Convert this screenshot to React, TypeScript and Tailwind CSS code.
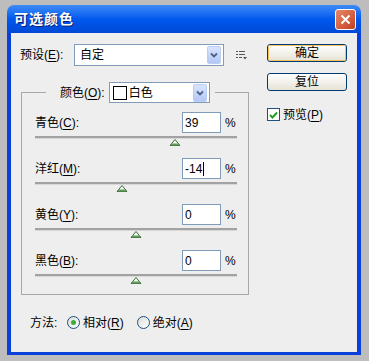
import React from "react"

const font = "font-['Liberation_Sans','Noto_Sans_CJK_SC',sans-serif]"

interface SliderRowProps {
  name: string
  hotkey: string
  value: number
  caret?: boolean
}

const Mn = ({ k }: { k: string }) => <span className="underline underline-offset-2">{k}</span>

const Thumb = () => (
  <svg width="11" height="7" viewBox="0 0 11 7">
    <polygon points="5.5,0.5 10.5,6.5 0.5,6.5" fill="#f4f7f1" stroke="#3d6b3d" strokeWidth="1" />
    <rect x="1.5" y="4.5" width="8" height="2" fill="#5f9a5c" />
  </svg>
)

const SliderRow = (props: SliderRowProps) => {
  const { name, hotkey, value, caret } = props
  const pct = ((value + 100) / 200) * 100

  return (
    <div className="h-[46px]">
      <div className="flex h-[21px] items-center">
        <span className="flex-1">
          {name}(<Mn k={hotkey} />):
        </span>
        <div className="flex h-[21px] w-[39px] items-center border border-[#7f9db9] bg-white pl-[2px]">
          {value}
          {caret ? <span className="ml-[1px] inline-block h-[14px] w-px bg-black" /> : null}
        </div>
        <span className="ml-[4px] w-[12px]">%</span>
      </div>
      <div className="relative mt-[3px] h-[3px] border-b border-[#d8d8d8] bg-[#a2a2a2]">
        <div className="absolute top-[3px] -translate-x-1/2" style={{ left: `${pct}%` }}>
          <Thumb />
        </div>
      </div>
    </div>
  )
}

const DropButton = () => (
  <div className="flex h-[18px] w-[14px] items-center justify-center rounded-[2px] border border-[#b9cdf6] bg-gradient-to-b from-[#d9e4fd] to-[#b3c8f5]">
    <svg width="8" height="6" viewBox="0 0 8 6">
      <path d="M1 1.5 L4 4.5 L7 1.5" fill="none" stroke="#4d6185" strokeWidth="1.8" />
    </svg>
  </div>
)

const XpButton = ({ label, isDefault }: { label: string; isDefault?: boolean }) => (
  <div className="h-[18px] w-[80px] rounded-[3px] border border-[#003c74] bg-gradient-to-b from-[#ffffff] to-[#e6e3d6]">
    <div
      className={`flex h-full w-full items-center justify-center rounded-[2px] ${
        isDefault ? "border border-[#f6c15a]" : ""
      }`}
    >
      {label}
    </div>
  </div>
)

const Radio = ({ checked }: { checked?: boolean }) => (
  <div className="flex size-[13px] items-center justify-center rounded-full border border-[#1c5180] bg-gradient-to-br from-[#dcdcd6] to-[#ffffff]">
    {checked ? <div className="size-[5px] rounded-full bg-[#3bab3b]" /> : null}
  </div>
)

export default function App() {
  return (
    <div className={`h-[361px] w-[369px] bg-[#bdbdbd] pl-[7px] pt-[5px] text-[12px] leading-none text-black ${font}`}>
      <div className="flex h-[350px] w-[354px] flex-col">
        {/* title bar */}
        <div className="flex h-[28px] items-center justify-between rounded-t-[7px] bg-gradient-to-b from-[#3d8cf7] via-[#0058ee] to-[#0049d6] pl-[7px] pr-[5px]">
          <span className="text-[14px] font-bold tracking-[1px] text-white [text-shadow:1px_1px_0_#0a1e6e]">
            可选颜色
          </span>
          <div className="flex size-[21px] items-center justify-center rounded-[3px] border border-white bg-gradient-to-br from-[#e8876a] to-[#c1401d]">
            <svg width="11" height="11" viewBox="0 0 11 11">
              <path d="M1.5 1.5 L9.5 9.5 M9.5 1.5 L1.5 9.5" stroke="white" strokeWidth="2" />
            </svg>
          </div>
        </div>

        <div className="flex flex-1 border-x-[4px] border-b-[3px] border-[#0a3fd9] bg-[#eeeeee]">
          {/* left */}
          <div className="w-[245px] pl-[9px] pt-[11px]">
            <div className="flex h-[22px] items-center">
              <span className="w-[54px]">
                预设(<Mn k="E" />):
              </span>
              <div className="flex h-[22px] w-[150px] items-center justify-between border border-[#7f9db9] bg-white pl-[5px] pr-[2px]">
                <span>自定</span>
                <DropButton />
              </div>
              <svg className="ml-[12px]" width="11" height="9" viewBox="0 0 11 9">
                <rect x="0" y="0" width="2" height="1" fill="#555" />
                <rect x="3" y="0" width="6" height="1" fill="#555" />
                <rect x="0" y="3" width="2" height="1" fill="#555" />
                <rect x="3" y="3" width="6" height="1" fill="#555" />
                <rect x="0" y="6" width="2" height="1" fill="#555" />
                <rect x="3" y="6" width="3" height="1" fill="#555" />
                <polygon points="7,6 11,6 9,8.5" fill="#555" />
              </svg>
            </div>

            <fieldset className="ml-[1px] mt-[16px] h-[213px] w-[228px] border border-[#a9a9a9] pl-[13px] pr-[11px]">
              <legend className="ml-[11px] flex items-center pl-[14px] pr-[5px]">
                <span className="mr-[4px]">
                  颜色(<Mn k="O" />):
                </span>
                <div className="flex h-[21px] w-[101px] items-center border border-[#7f9db9] bg-white pl-[3px] pr-[2px]">
                  <div className="size-[14px] border border-black bg-white" />
                  <span className="ml-[2px] flex-1">白色</span>
                  <DropButton />
                </div>
              </legend>
              <div className="pt-[9px]">
                <SliderRow name="青色" hotkey="C" value={39} />
                <SliderRow name="洋红" hotkey="M" value={-14} caret />
                <SliderRow name="黄色" hotkey="Y" value={0} />
                <SliderRow name="黑色" hotkey="B" value={0} />
              </div>
            </fieldset>

            <div className="ml-[10px] mt-[21px] flex items-center">
              <span className="w-[37px]">方法:</span>
              <Radio checked />
              <span className="ml-[3px]">
                相对(<Mn k="R" />)
              </span>
              <div className="ml-[13px]">
                <Radio />
              </div>
              <span className="ml-[3px]">
                绝对(<Mn k="A" />)
              </span>
            </div>
          </div>

          {/* right */}
          <div className="pl-[11px] pt-[11px]">
            <XpButton label="确定" isDefault />
            <div className="mt-[11px]">
              <XpButton label="复位" />
            </div>
            <div className="mt-[17px] flex items-center">
              <div className="flex size-[13px] items-center justify-center border border-[#1c5180] bg-white">
                <svg width="9" height="8" viewBox="0 0 9 8">
                  <path d="M1 4 L3.5 6.5 L8 1.5" fill="none" stroke="#21a121" strokeWidth="2" />
                </svg>
              </div>
              <span className="ml-[3px]">
                预览(<Mn k="P" />)
              </span>
            </div>
          </div>
        </div>
      </div>
    </div>
  )
}
